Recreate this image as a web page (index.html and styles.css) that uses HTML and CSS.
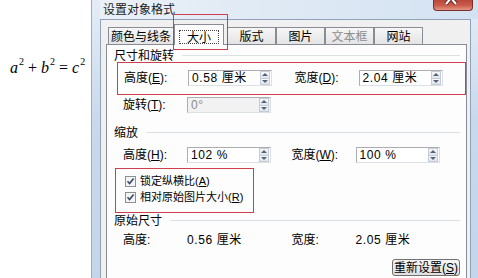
FILE: index.html
```html
<!DOCTYPE html>
<html lang="zh-CN">
<head>
    <meta charset="UTF-8">
    <title>设置对象格式</title>
    <link rel="stylesheet" href="styles.css">
</head>
<body>
    <div class="stage">
        <div class="canvas">
            <div class="formula"><i>a</i><sup>2</sup><span class="op">+</span><i>b</i><sup>2</sup><span class="op">=</span><i>c</i><sup>2</sup></div>
        </div>

        <div class="window">
            <div class="titlebar">
                <span class="title">设置对象格式</span>
                <span class="close">
                    <svg width="40" height="10" viewBox="0 0 40 10">
                        <path d="M13 -8 L23 4 M23 -8 L13 4" stroke="#5a1c18" stroke-width="4" fill="none"/>
                        <path d="M13 -8 L23 4 M23 -8 L13 4" stroke="#ffffff" stroke-width="2.2" fill="none"/>
                    </svg>
                </span>
            </div>

            <div class="client">
                <div class="tabs">
                    <span class="tab">颜色与线条</span>
                    <span class="tab active"><span class="focus">大小</span><span class="mark"></span></span>
                    <span class="tab">版式</span>
                    <span class="tab">图片</span>
                    <span class="tab disabled">文本框</span>
                    <span class="tab">网站</span>
                </div>

                <div class="panel">
                    <div class="group">尺寸和旋转</div>
                    <div class="box box-size">
                        <div class="row">
                            <div class="field">
                                <span class="label">高度(<u>E</u>):</span>
                                <span class="input"><span class="value">0.58 厘米</span><span class="spin"><span class="up"></span><span class="down"></span></span></span>
                            </div>
                            <div class="field">
                                <span class="label">宽度(<u>D</u>):</span>
                                <span class="input"><span class="value">2.04 厘米</span><span class="spin"><span class="up"></span><span class="down"></span></span></span>
                            </div>
                        </div>
                    </div>
                    <div class="row indent row-rotate">
                        <div class="field">
                            <span class="label">旋转(<u>T</u>):</span>
                            <span class="input off"><span class="value">0°</span><span class="spin"><span class="up"></span><span class="down"></span></span></span>
                        </div>
                    </div>

                    <div class="group group-scale">缩放</div>
                    <div class="row indent row-scale">
                        <div class="field">
                            <span class="label">高度(<u>H</u>):</span>
                            <span class="input"><span class="value">102 %</span><span class="spin"><span class="up"></span><span class="down"></span></span></span>
                        </div>
                        <div class="field">
                            <span class="label">宽度(<u>W</u>):</span>
                            <span class="input"><span class="value">100 %</span><span class="spin"><span class="up"></span><span class="down"></span></span></span>
                        </div>
                    </div>
                    <div class="box box-check">
                        <label class="check-row">
                            <svg class="check" width="11" height="11" viewBox="0 0 11 11"><rect x="0.5" y="0.5" width="10" height="10" fill="#f4f5f7" stroke="#8e8f8f"/><path d="M2.5 5.3 L4.6 7.6 L8.6 2.6" fill="none" stroke="#3a4860" stroke-width="1.6"/></svg>
                            <span>锁定纵横比(<u>A</u>)</span>
                        </label>
                        <label class="check-row">
                            <svg class="check" width="11" height="11" viewBox="0 0 11 11"><rect x="0.5" y="0.5" width="10" height="10" fill="#f4f5f7" stroke="#8e8f8f"/><path d="M2.5 5.3 L4.6 7.6 L8.6 2.6" fill="none" stroke="#3a4860" stroke-width="1.6"/></svg>
                            <span>相对原始图片大小(<u>R</u>)</span>
                        </label>
                    </div>

                    <div class="group group-orig">原始尺寸</div>
                    <div class="row indent row-orig">
                        <div class="field">
                            <span class="label">高度:</span>
                            <span class="value">0.56 厘米</span>
                        </div>
                        <div class="field">
                            <span class="label">宽度:</span>
                            <span class="value">2.05 厘米</span>
                        </div>
                    </div>

                    <div class="actions">
                        <button class="btn">重新设置(<u>S</u>)</button>
                    </div>
                </div>
            </div>
        </div>
    </div>
</body>
</html>
```

FILE: styles.css
```css
body {
    margin: 0;
    width: 478px;
    height: 278px;
    overflow: hidden;
    background: #fff;
    font-family: "Liberation Sans", "Noto Sans CJK SC", sans-serif;
    font-size: 12px;
    line-height: 14px;
    color: #000;
}
.stage {
    display: flex;
    height: 300px;
}
.canvas {
    flex: none;
    width: 91px;
    box-sizing: border-box;
    padding: 58px 0 0 10px;
}
.formula {
    font-family: "Liberation Serif", serif;
    font-size: 16px;
    line-height: 20px;
    white-space: nowrap;
}
.formula sup {
    font-size: 10px;
    line-height: 0;
    vertical-align: 8px;
    margin-left: 1px;
}
.op {
    margin: 0 4px;
}

/* window frame */
.window {
    flex: none;
    width: 390px;
    box-sizing: border-box;
    border-left: 1px solid #9eaec0;
    padding-left: 8px;
    background: linear-gradient(180deg, #e4edf7 0%, #c9d9ec 40%, #c3d5ea 100%);
    display: flex;
    flex-direction: column;
}
.titlebar {
    display: flex;
    justify-content: space-between;
    height: 19px;
    padding: 0 8px 0 3px;
    background: linear-gradient(90deg, #eaf0f7, #d3e2f2);
}
.title {
    padding-top: 2px;
    line-height: 13px;
    color: #1c1c1c;
    font-family: "Noto Sans CJK SC", sans-serif;
}
.close {
    display: block;
    width: 40px;
    height: 11px;
    box-sizing: border-box;
    border: 1px solid #7a2f28;
    border-top: none;
    border-radius: 0 0 4px 4px;
    background: linear-gradient(180deg, #b9463a 0%, #cc5d4c 55%, #e39786 100%);
    overflow: hidden;
}
.close svg {
    display: block;
    margin-left: -1px;
}

.client {
    flex: 1;
    width: 371px;
    box-sizing: border-box;
    border: 1px solid #8fa2b8;
    border-bottom: none;
    background: #f0f0f0;
    padding: 4px 0 0 5px;
    display: flex;
    flex-direction: column;
}

/* tabs */
.tabs {
    display: flex;
    align-items: flex-end;
    height: 20px;
    padding-left: 2px;
    position: relative;
    z-index: 1;
}
.tab {
    height: 17px;
    min-width: 49px;
    box-sizing: border-box;
    padding: 0 2px;
    border: 1px solid #898c95;
    border-bottom: none;
    background: linear-gradient(180deg, #f6f6f6, #e4e4e4);
    line-height: 16px;
    text-align: center;
    font-family: "Noto Sans CJK SC", sans-serif;
}
.tab.active {
    position: relative;
    height: 21px;
    margin-bottom: -1px;
    padding: 4px 4px 0;
    min-width: 0;
    background: #fdfdfd;
}
.tab.active + .tab {
    margin-left: 3px;
}
.tab.disabled {
    color: #8d8d8d;
}
.focus {
    display: inline-block;
    padding: 0 7px;
    line-height: 12px;
    border: 1px dotted #444;
}
.mark {
    position: absolute;
    left: -2px;
    right: -5px;
    top: -11px;
    bottom: -5px;
    border: 1px solid #cf3e4d;
}

/* panel */
.panel {
    flex: 1;
    width: 361px;
    box-sizing: border-box;
    border: 1px solid #898c95;
    background: #fdfdfd;
    padding: 3px 6px 0 7px;
    display: flex;
    flex-direction: column;
}
.group {
    display: flex;
    align-items: center;
    height: 14px;
    font-family: "Noto Sans CJK SC", sans-serif;
}
.group::after {
    content: "";
    flex: 1;
    height: 1px;
    margin-left: 8px;
    background: #d9e1e7;
}
.group-scale {
    margin-top: 12px;
}

.box {
    border: 1px solid #cf3e4d;
    box-sizing: border-box;
}
.box-size {
    width: 349px;
    margin-left: 3px;
    padding: 7px 0 8px 6px;
}
.box-check {
    width: 139px;
    margin: 5px 0 0 1px;
    padding: 4px 0 7px 9px;
}

.row {
    display: flex;
    height: 16px;
}
.indent {
    margin-left: 9px;
}
.row-rotate {
    margin-top: 2px;
}
.row-scale {
    margin-top: 8px;
}
.row-orig {
    margin-top: 5px;
}
.field {
    display: flex;
    align-items: center;
    width: 184px;
}
.label {
    width: 64px;
    flex: none;
}
.input {
    display: flex;
    align-items: center;
    justify-content: space-between;
    width: 84px;
    height: 16px;
    box-sizing: border-box;
    padding-left: 3px;
    border: 1px solid #abadb3;
    border-bottom-color: #dbdfe6;
    border-right-color: #dbdfe6;
    background: #fff;
}
.input.off {
    background: #f2f2f2;
    color: #8a8a8a;
}
.value {
    letter-spacing: 0.6px;
}
.spin {
    display: flex;
    flex-direction: column;
    width: 10px;
    height: 14px;
    margin-right: 1px;
}
.spin span {
    flex: 1;
    display: flex;
    align-items: center;
    justify-content: center;
    border: 1px solid #c5ccd6;
    background: linear-gradient(180deg, #f6f8fb, #dfe5ec);
}
.spin .down {
    border-top: none;
}
.spin .up::after {
    content: "";
    border-left: 3px solid transparent;
    border-right: 3px solid transparent;
    border-bottom: 3px solid #56627a;
}
.spin .down::after {
    content: "";
    border-left: 3px solid transparent;
    border-right: 3px solid transparent;
    border-top: 3px solid #56627a;
}

.check-row {
    display: flex;
    align-items: center;
    gap: 4px;
    height: 16px;
    font-size: 11px;
    white-space: nowrap;
}
.check {
    flex: none;
}

.actions {
    display: flex;
    justify-content: flex-end;
    margin-top: 11px;
}
.btn {
    height: 17px;
    padding: 0 1px;
    border: 1px solid #707070;
    border-radius: 3px;
    background: linear-gradient(180deg, #f6f6f6, #e0e0e0);
    font-family: "Liberation Sans", "Noto Sans CJK SC", sans-serif;
    font-size: 12px;
    line-height: 14px;
    color: #000;
}
```
